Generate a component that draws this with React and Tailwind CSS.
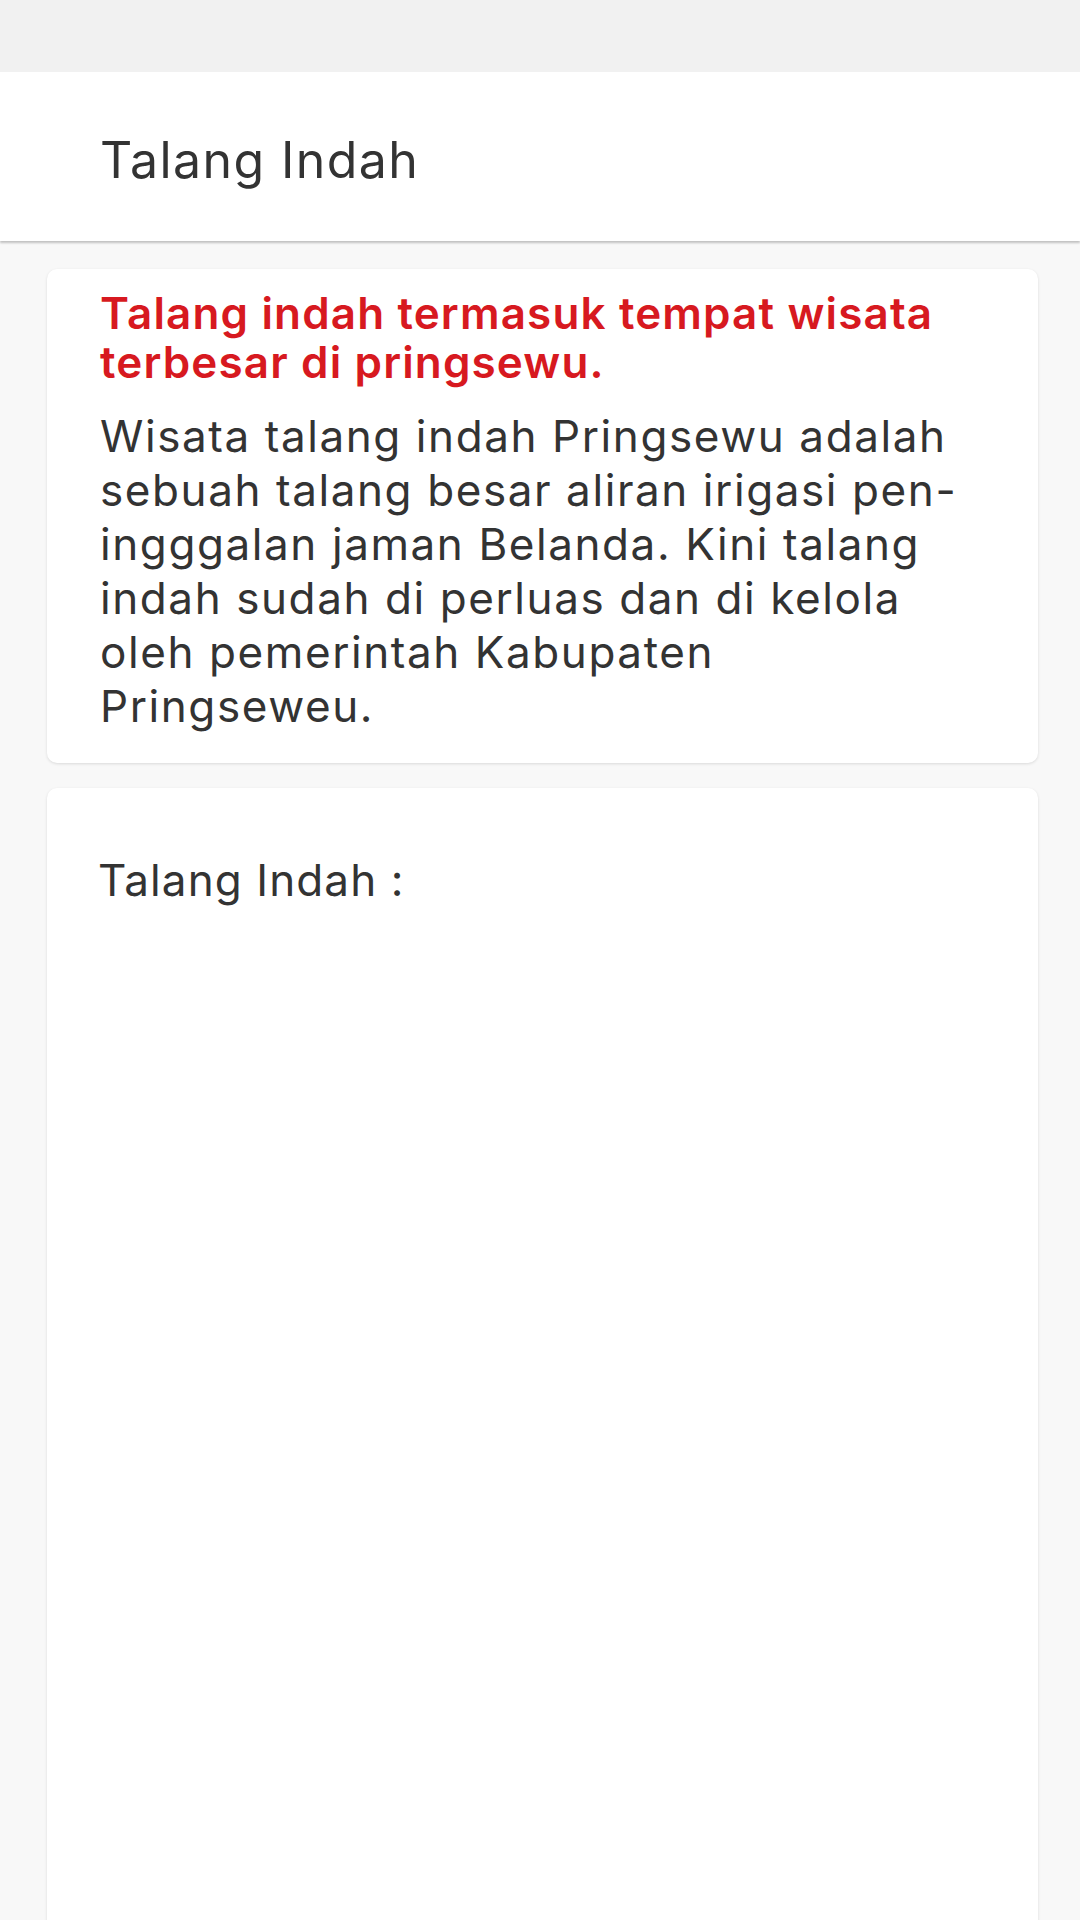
export default function App() {
  const font = { fontFamily: "Inter, 'Open Sans', sans-serif" };
  const body = [
    "Wisata talang indah Pringsewu adalah",
    "sebuah talang besar aliran irigasi pen-",
    "ingggalan jaman Belanda. Kini talang",
    "indah sudah di perluas dan di kelola",
    "oleh pemerintah Kabupaten",
    "Pringseweu.",
  ];
  return (
    <div className="min-h-[1920px] bg-[#f8f8f8] text-[#333333]" style={font}>
      <div className="h-[72px] bg-[#f1f1f1]" />
      <header className="relative z-10 h-[169px] bg-white shadow-[0_2px_2px_rgba(0,0,0,0.22)] pl-[100px] pt-[58px]">
        <h1 className="text-[50px] leading-[60px] font-normal tracking-[0.028em] whitespace-nowrap">Talang Indah</h1>
      </header>
      <main className="pl-[47px] pr-[42px] pt-[28px] flex flex-col gap-[25px]">
        <section className="bg-white rounded-[10px] shadow-[0_1px_3px_rgba(0,0,0,0.12)] pl-[53px] pr-[20px] pt-[20px] pb-[30px]">
          <h2 className="text-[44px] leading-[49px] font-semibold tracking-[0.026em] text-[#d71920]">
            <span className="block whitespace-nowrap">Talang indah termasuk tempat wisata</span>
            <span className="block whitespace-nowrap">terbesar di pringsewu.</span>
          </h2>
          <p className="mt-[22px] text-[44px] leading-[54px] tracking-[0.036em]">
            {body.map((l) => (
              <span key={l} className="block whitespace-nowrap">{l}</span>
            ))}
          </p>
        </section>
        <section className="bg-white rounded-t-[10px] shadow-[0_1px_3px_rgba(0,0,0,0.12)] pl-[51px] pt-[65px] h-[1135px]">
          <p className="text-[44px] leading-[54px] tracking-[0.025em] whitespace-nowrap">Talang Indah :</p>
        </section>
      </main>
    </div>
  );
}
